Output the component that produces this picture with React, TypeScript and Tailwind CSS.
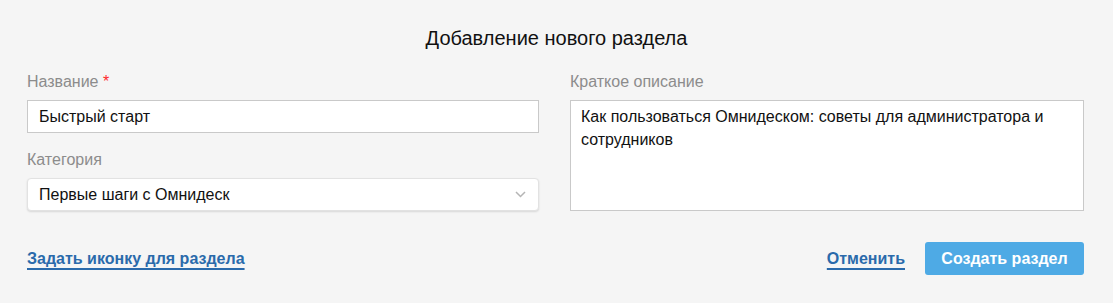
import React from "react";

export default function App() {
  return (
    <div className="w-[1113px] h-[303px] bg-[#f5f5f5] text-[#111] overflow-hidden" style={{ fontFamily: '"Liberation Sans", Arial, sans-serif' }}>
      <div className="pt-[26px] text-center text-[20px] leading-[24px] text-[#111]">Добавление нового раздела</div>
      <div className="flex gap-[31px] pl-[27px] pr-[29px] pt-[22px]">
        <div className="w-[512px] flex flex-col">
          <label className="text-[16px] leading-[20px] text-[#8c8c8c]">
            Название <span className="text-[#ff2a2a]">*</span>
          </label>
          <div className="mt-[8px] h-[33px] bg-white border border-[#c9c9c9] flex items-center px-[11px] text-[16px]">Быстрый старт</div>
          <label className="mt-[17px] text-[16px] leading-[20px] text-[#8c8c8c]">Категория</label>
          <div className="mt-[8px] h-[33px] bg-white border border-[#e2e2e2] rounded-[4px] shadow-[0_1px_2px_rgba(0,0,0,0.12)] flex items-center justify-between pl-[11px] pr-[12px] text-[16px]">
            <span>Первые шаги с Омнидеск</span>
            <svg width="11" height="7" viewBox="0 0 11 7" fill="none">
              <path d="M1 1l4.5 4.5L10 1" stroke="#b5b5b5" strokeWidth="1.5" />
            </svg>
          </div>
        </div>
        <div className="flex-1 flex flex-col">
          <label className="text-[16px] leading-[20px] text-[#8c8c8c]">Краткое описание</label>
          <div className="mt-[8px] h-[111px] bg-white border border-[#c9c9c9] px-[10px] pt-[4px] text-[16px] leading-[23px]">
            Как пользоваться Омнидеском: советы для администратора и сотрудников
          </div>
        </div>
      </div>
      <div className="flex items-center justify-between pl-[27px] pr-[29px] mt-[31px]">
        <a className="text-[16px] font-bold text-[#2a6aab] underline underline-offset-[4px] decoration-[1.5px] cursor-pointer">Задать иконку для раздела</a>
        <div className="flex items-center gap-[20px]">
          <a className="text-[16px] font-bold text-[#2a6aab] underline underline-offset-[4px] decoration-[1.5px] cursor-pointer">Отменить</a>
          <button className="h-[33px] w-[159px] rounded-[3px] bg-[#4eaae5] text-white text-[16px] font-bold">Создать раздел</button>
        </div>
      </div>
    </div>
  );
}
